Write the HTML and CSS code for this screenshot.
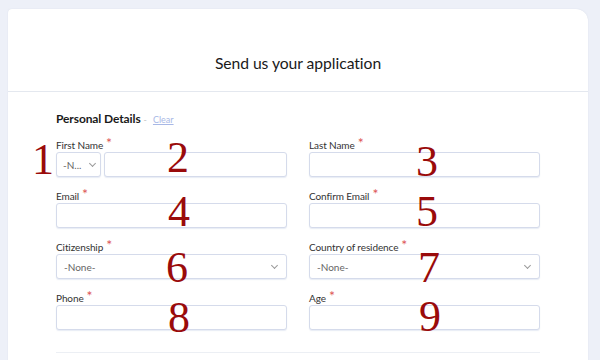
FILE: index.html
```html
<!DOCTYPE html>
<html>
<head>
<meta charset="utf-8">
<link rel="stylesheet" href="styles.css">
</head>
<body>
<div class="card">
  <div class="card-head"><h1 class="title">Send us your application</h1></div>
  <div class="card-body">
    <div class="section-head">
      <span class="section-title">Personal Details</span>
      <span class="dash">-</span>
      <span class="clear">Clear</span>
    </div>
    <div class="grid">
      <div class="field">
        <label class="label">First Name<span class="req">*</span></label>
        <div class="name-row">
          <div class="select small"><span class="sel-text">-N...</span><span class="chev"></span></div>
          <div class="input grow"></div>
        </div>
      </div>
      <div class="field">
        <label class="label">Last Name<span class="req">*</span></label>
        <div class="input"></div>
      </div>
      <div class="field">
        <label class="label">Email<span class="req">*</span></label>
        <div class="input"></div>
      </div>
      <div class="field">
        <label class="label">Confirm Email<span class="req">*</span></label>
        <div class="input"></div>
      </div>
      <div class="field">
        <label class="label">Citizenship<span class="req">*</span></label>
        <div class="select"><span class="sel-text">-None-</span><span class="chev"></span></div>
      </div>
      <div class="field">
        <label class="label">Country of residence<span class="req">*</span></label>
        <div class="select"><span class="sel-text">-None-</span><span class="chev"></span></div>
      </div>
      <div class="field">
        <label class="label">Phone<span class="req">*</span></label>
        <div class="input"></div>
      </div>
      <div class="field">
        <label class="label">Age<span class="req">*</span></label>
        <div class="input"></div>
      </div>
    </div>
    <div class="divider"></div>
  </div>
</div>
<span class="num n1">1</span>
<span class="num n2">2</span>
<span class="num n3">3</span>
<span class="num n4">4</span>
<span class="num n5">5</span>
<span class="num n6">6</span>
<span class="num n7">7</span>
<span class="num n8">8</span>
<span class="num n9">9</span>
</body>
</html>
```
FILE: styles.css
```css
html, body {
  margin: 0;
  padding: 0;
}
body {
  position: relative;
  width: 600px;
  height: 360px;
  overflow: hidden;
  background: #edf0f8;
  font-family: Lato, "Open Sans", sans-serif;
  color: #2b2b2b;
}
.card {
  margin: 9px 0 0 8px;
  width: 580px;
  height: 400px;
  background: #fff;
  border-radius: 4px 12px 0 0;
  box-shadow: 0 0 1px rgba(180, 190, 210, 0.5);
}
.card-head {
  padding: 44px 0 18px;
  border-bottom: 1px solid #e4e8ef;
}
.title {
  margin: 0;
  font-size: 15.7px;
  line-height: 20px;
  font-weight: 400;
  text-align: center;
  color: #1a1a1a;
  letter-spacing: -0.05px;
}
.card-body {
  padding: 19px 48px 0 48px;
}
.section-head {
  display: flex;
  align-items: baseline;
  height: 16px;
  line-height: 16px;
  margin-bottom: 10px;
}
.section-title {
  font-size: 12px;
  font-weight: 700;
  color: #1a1a1a;
  letter-spacing: -0.1px;
}
.dash {
  font-size: 9px;
  color: #c4c4c4;
  margin: 0 6px 0 3px;
}
.clear {
  font-size: 9px;
  color: #a8b8e6;
  text-decoration: underline;
}
.grid {
  display: grid;
  grid-template-columns: 231px 231px;
  column-gap: 22px;
  row-gap: 11px;
}
.field {
  display: flex;
  flex-direction: column;
}
.label {
  font-size: 10px;
  line-height: 16px;
  height: 13px;
  margin-bottom: 2px;
  color: #333;
  letter-spacing: -0.1px;
}
.req {
  color: #dd5555;
  font-size: 14px;
  line-height: 10px;
  position: relative;
  top: -1px;
  margin-left: 3px;
}
.input, .select {
  box-sizing: border-box;
  height: 25px;
  border: 1px solid #d5dbeb;
  border-radius: 3px;
  background: #fff;
  box-shadow: 0 1px 1px rgba(210, 218, 235, 0.5);
}
.name-row {
  display: flex;
  gap: 3px;
}
.grow {
  flex: 1;
}
.select {
  display: flex;
  align-items: center;
  justify-content: space-between;
  padding: 0 9px 0 7px;
}
.select.small {
  width: 45px;
  flex: none;
  padding: 0 5px 0 6px;
}
.sel-text {
  font-size: 10px;
  color: #666;
}
.chev {
  width: 4px;
  height: 4px;
  border-right: 1px solid #9a9a9a;
  border-bottom: 1px solid #9a9a9a;
  transform: rotate(45deg);
  margin-top: -3px;
}
.divider {
  margin-top: 22px;
  width: 484px;
  border-top: 1px solid #eceff4;
}
.num {
  position: absolute;
  font-family: "Liberation Serif", serif;
  font-size: 44px;
  line-height: 44px;
  color: #9a0b0b;
}
.n1 { left: 32px; top: 138px; }
.n2 { left: 167px; top: 136px; }
.n3 { left: 416px; top: 140px; }
.n4 { left: 168px; top: 190px; }
.n5 { left: 416px; top: 190px; }
.n6 { left: 166px; top: 246px; }
.n7 { left: 418px; top: 246px; }
.n8 { left: 168px; top: 296px; }
.n9 { left: 419px; top: 295px; }
```
